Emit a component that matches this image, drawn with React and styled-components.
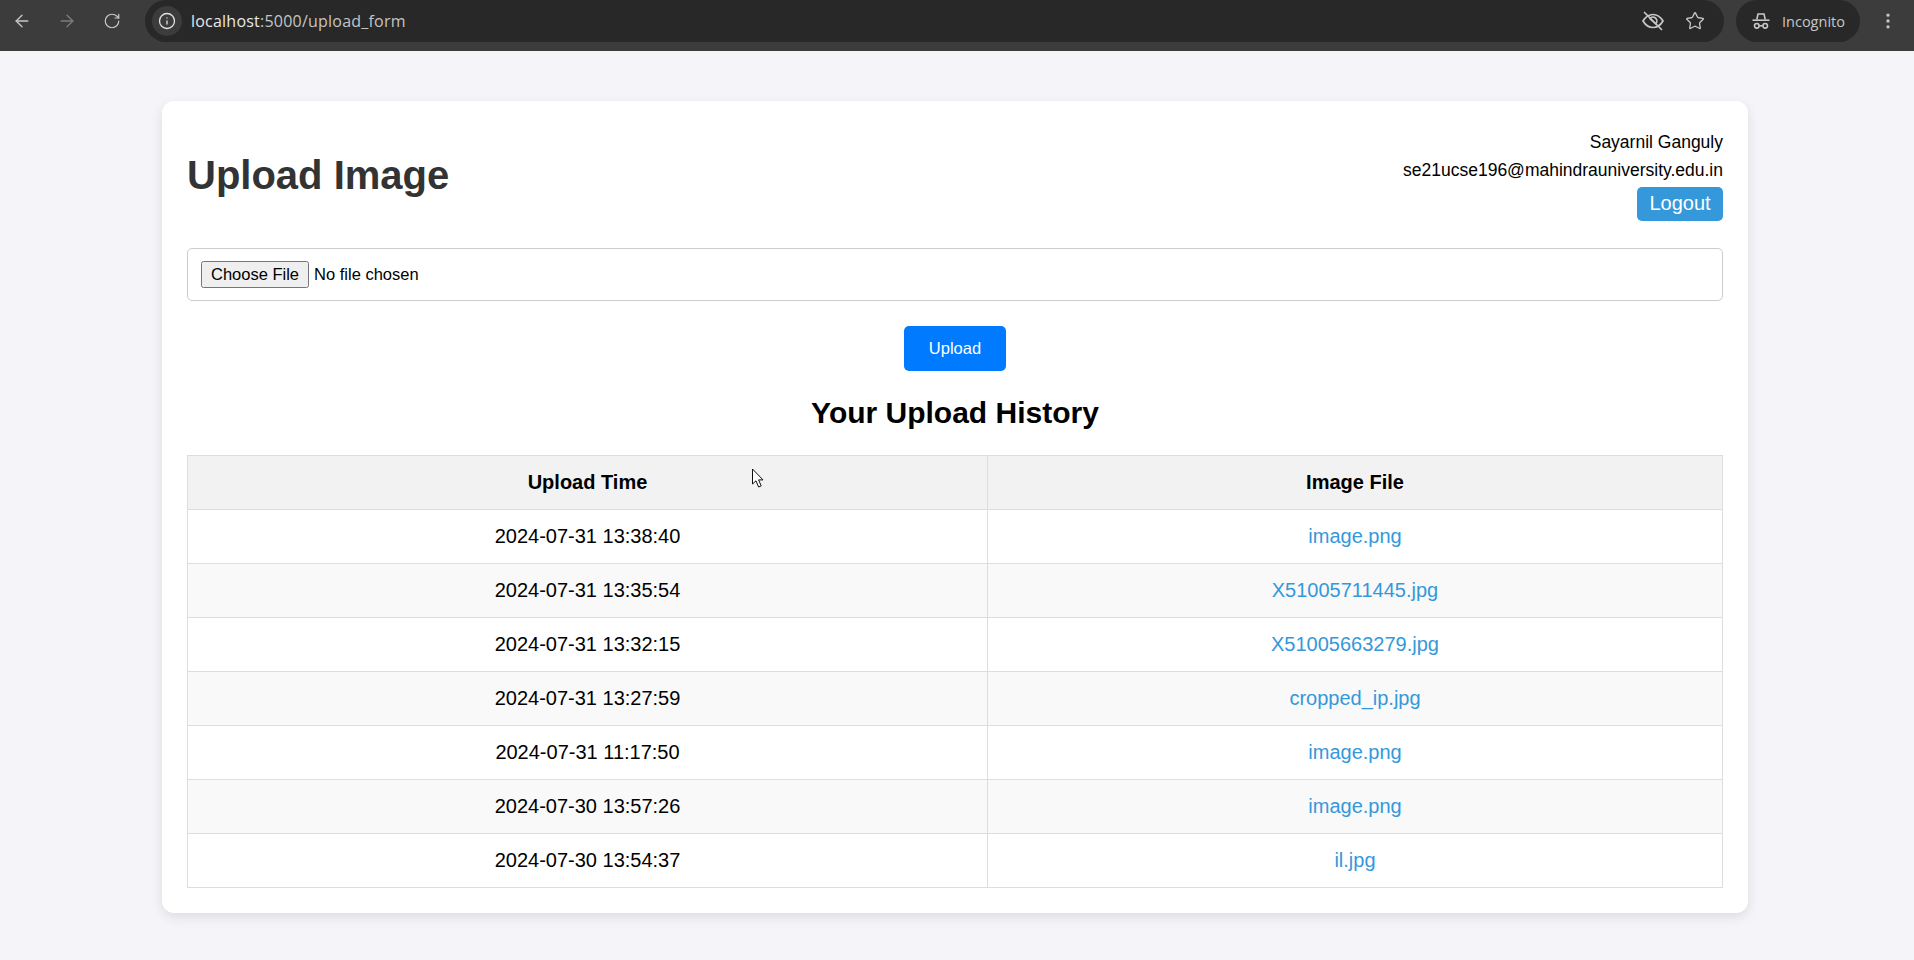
import React from 'react';
import styled, { createGlobalStyle } from 'styled-components';
import { ArrowLeft, ArrowRight, RotateCw, Info, Star, EllipsisVertical } from 'lucide-react';

const GlobalStyle = createGlobalStyle`
  html, body {
    margin: 0;
    padding: 0;
    height: 100%;
    overflow: hidden;
    background: #f4f4f9;
    font-family: "Liberation Sans", Arial, sans-serif;
  }
`;

const Toolbar = styled.header`
  display: flex;
  align-items: flex-start;
  height: 51px;
  background: #3c3c3c;
  color: #c7c7c7;
`;

const NavButtons = styled.div`
  display: flex;
  align-items: center;
  height: 42px;
  padding-left: 12px;
  gap: 25px;
  width: 133px;
  box-sizing: border-box;
`;

const NavIcon = styled.span`
  display: flex;
  justify-content: center;
  width: 20px;
  color: ${p => (p.$dim ? '#7d7d7d' : '#c7c7c7')};
`;

const Omnibox = styled.div`
  display: flex;
  align-items: center;
  height: 42px;
  width: 1579px;
  margin-left: 12px;
  padding: 0 19px 0 7px;
  box-sizing: border-box;
  background: #282828;
  border-radius: 21px;
  font-family: "Open Sans", sans-serif;
  font-size: 16px;
`;

const SiteInfo = styled.span`
  display: flex;
  align-items: center;
  justify-content: center;
  width: 30px;
  height: 30px;
  border-radius: 50%;
  background: #3c3c3c;
  color: #e3e3e3;
  margin-right: 9px;
`;

const Url = styled.span`
  flex: 1;
  color: #c4c4c4;
  letter-spacing: 0.22px;
  b {
    font-weight: 400;
    color: #e8e8e8;
  }
`;

const OmniIcon = styled.span`
  display: flex;
  color: #c7c7c7;
  margin-left: 20px;
`;

const ProfileChip = styled.div`
  display: flex;
  align-items: center;
  gap: 11px;
  height: 42px;
  margin-left: 12px;
  padding: 0 15px;
  box-sizing: border-box;
  border-radius: 21px;
  background: #282828;
  color: #c7c7c7;
  font-family: "Open Sans", sans-serif;
  font-size: 14.5px;
`;

const MenuIcon = styled.span`
  display: flex;
  align-items: center;
  height: 42px;
  margin-left: 18px;
  color: #c7c7c7;
`;

const Page = styled.main`
  padding: 50px 166px 0 162px;
`;

const Card = styled.section`
  box-sizing: border-box;
  height: 812px;
  padding: 25px;
  background: #fff;
  border-radius: 12px;
  box-shadow: 0 4px 12px rgba(0, 0, 0, 0.1);
`;

const HeaderRow = styled.div`
  display: flex;
  justify-content: space-between;
  align-items: center;
  height: 96px;
  margin-bottom: 26px;
`;

const Title = styled.h1`
  margin: 0;
  padding-top: 2px;
  font-size: 40px;
  line-height: 46px;
  font-weight: 700;
  color: #333;
`;

const UserBox = styled.div`
  display: flex;
  flex-direction: column;
  align-items: flex-end;
  font-size: 17.5px;
  color: #000;
`;

const UserLine = styled.div`
  line-height: 28px;
`;

const LogoutButton = styled.button`
  width: 86px;
  height: 34px;
  margin-top: 3px;
  padding: 0;
  border: 0;
  border-radius: 5px;
  background: #3498db;
  color: #fff;
  font-family: inherit;
  font-size: 20px;
`;

const FileInput = styled.input`
  display: block;
  box-sizing: border-box;
  width: 100%;
  height: 53px;
  padding: 12px 12px 12px 13px;
  border: 1px solid #ccc;
  border-radius: 5px;
  font-family: "Liberation Sans", Arial, sans-serif;
  font-size: 16.5px;
  color: #000;

  &::file-selector-button {
    height: 27px;
    padding: 0 8px 1px;
    margin-right: 5px;
  }
`;

const UploadButton = styled.button`
  display: block;
  width: 102px;
  height: 45px;
  margin: 25px auto 0;
  padding: 0 0 1px;
  border: 0;
  border-radius: 5px;
  background: #007bff;
  color: #fff;
  font-family: inherit;
  font-size: 16.5px;
`;

const SectionTitle = styled.h2`
  margin: 25px 0 25px;
  font-size: 30px;
  line-height: 34px;
  font-weight: 700;
  color: #000;
  text-align: center;
`;

const HistoryTable = styled.table`
  width: 100%;
  table-layout: fixed;
  border-collapse: collapse;
  font-size: 20px;
`;

const HeadCell = styled.th`
  height: 53px;
  padding: 0;
  border: 1px solid #ddd;
  background: #f2f2f2;
  font-weight: 700;
  text-align: center;
  width: ${p => p.$width || 'auto'};
`;

const Row = styled.tr`
  &:nth-child(even) {
    background: #f9f9f9;
  }
`;

const Cell = styled.td`
  height: 53px;
  padding: 0;
  border: 1px solid #ddd;
  text-align: center;
`;

const FileLink = styled.a`
  color: #3498db;
  text-decoration: none;
`;

const Cursor = styled.svg`
  position: absolute;
  left: 751px;
  top: 468px;
`;

const uploads = [
  ['2024-07-31 13:38:40', 'image.png'],
  ['2024-07-31 13:35:54', 'X51005711445.jpg'],
  ['2024-07-31 13:32:15', 'X51005663279.jpg'],
  ['2024-07-31 13:27:59', 'cropped_ip.jpg'],
  ['2024-07-31 11:17:50', 'image.png'],
  ['2024-07-30 13:57:26', 'image.png'],
  ['2024-07-30 13:54:37', 'il.jpg'],
];

function EyeSlashIcon() {
  return (
    <svg width="24" height="24" viewBox="0 0 24 24" fill="none" stroke="currentColor" strokeWidth="1.7" strokeLinecap="round">
      <path d="M2 12 C5 7 8.5 5.5 12 5.5 C15.5 5.5 19 7 22 12 C19 17 15.5 18.5 12 18.5 C8.5 18.5 5 17 2 12 Z" />
      <path d="M9 9.6 A3.8 3.8 0 0 1 15 14.4 M9.2 9.8 L14.8 15" />
      <path d="M3.5 3.5 L20.5 20.5" />
    </svg>
  );
}

function IncognitoIcon() {
  return (
    <svg width="20" height="20" viewBox="0 0 20 20" fill="none" stroke="currentColor" strokeWidth="1.6">
      <path d="M5.8 8.5 L7 3 H13 L14.2 8.5" />
      <path d="M1.5 9.2 H18.5" />
      <circle cx="5.8" cy="14.8" r="2.3" />
      <circle cx="14.2" cy="14.8" r="2.3" />
      <path d="M8.1 14.8 H11.9" />
    </svg>
  );
}

export default function App() {
  return (
    <>
      <GlobalStyle />
      <Toolbar>
        <NavButtons>
          <NavIcon><ArrowLeft size={20} strokeWidth={1.6} /></NavIcon>
          <NavIcon $dim><ArrowRight size={20} strokeWidth={1.6} /></NavIcon>
          <NavIcon><RotateCw size={18} strokeWidth={1.6} /></NavIcon>
        </NavButtons>
        <Omnibox>
          <SiteInfo><Info size={18} strokeWidth={1.7} /></SiteInfo>
          <Url><b>localhost</b>:5000/upload_form</Url>
          <OmniIcon><EyeSlashIcon /></OmniIcon>
          <OmniIcon><Star size={20} strokeWidth={1.6} /></OmniIcon>
        </Omnibox>
        <ProfileChip>
          <IncognitoIcon />
          Incognito
        </ProfileChip>
        <MenuIcon><EllipsisVertical size={20} strokeWidth={2} /></MenuIcon>
      </Toolbar>
      <Page>
        <Card>
          <HeaderRow>
            <Title>Upload Image</Title>
            <UserBox>
              <UserLine>Sayarnil Ganguly</UserLine>
              <UserLine>se21ucse196@mahindrauniversity.edu.in</UserLine>
              <LogoutButton>Logout</LogoutButton>
            </UserBox>
          </HeaderRow>
          <FileInput type="file" />
          <UploadButton>Upload</UploadButton>
          <SectionTitle>Your Upload History</SectionTitle>
          <HistoryTable>
            <thead>
              <tr>
                <HeadCell $width="799px">Upload Time</HeadCell>
                <HeadCell>Image File</HeadCell>
              </tr>
            </thead>
            <tbody>
              {uploads.map(([time, file], i) => (
                <Row key={i}>
                  <Cell>{time}</Cell>
                  <Cell><FileLink href="#">{file}</FileLink></Cell>
                </Row>
              ))}
            </tbody>
          </HistoryTable>
        </Card>
      </Page>
      <Cursor width="14" height="22" viewBox="0 0 14 22">
        <path d="M1.5 1 V16 L5 12.8 L7.6 19 L10.2 17.9 L7.6 11.9 H12 Z" fill="#fff" stroke="#111" strokeWidth="1" />
      </Cursor>
    </>
  );
}
